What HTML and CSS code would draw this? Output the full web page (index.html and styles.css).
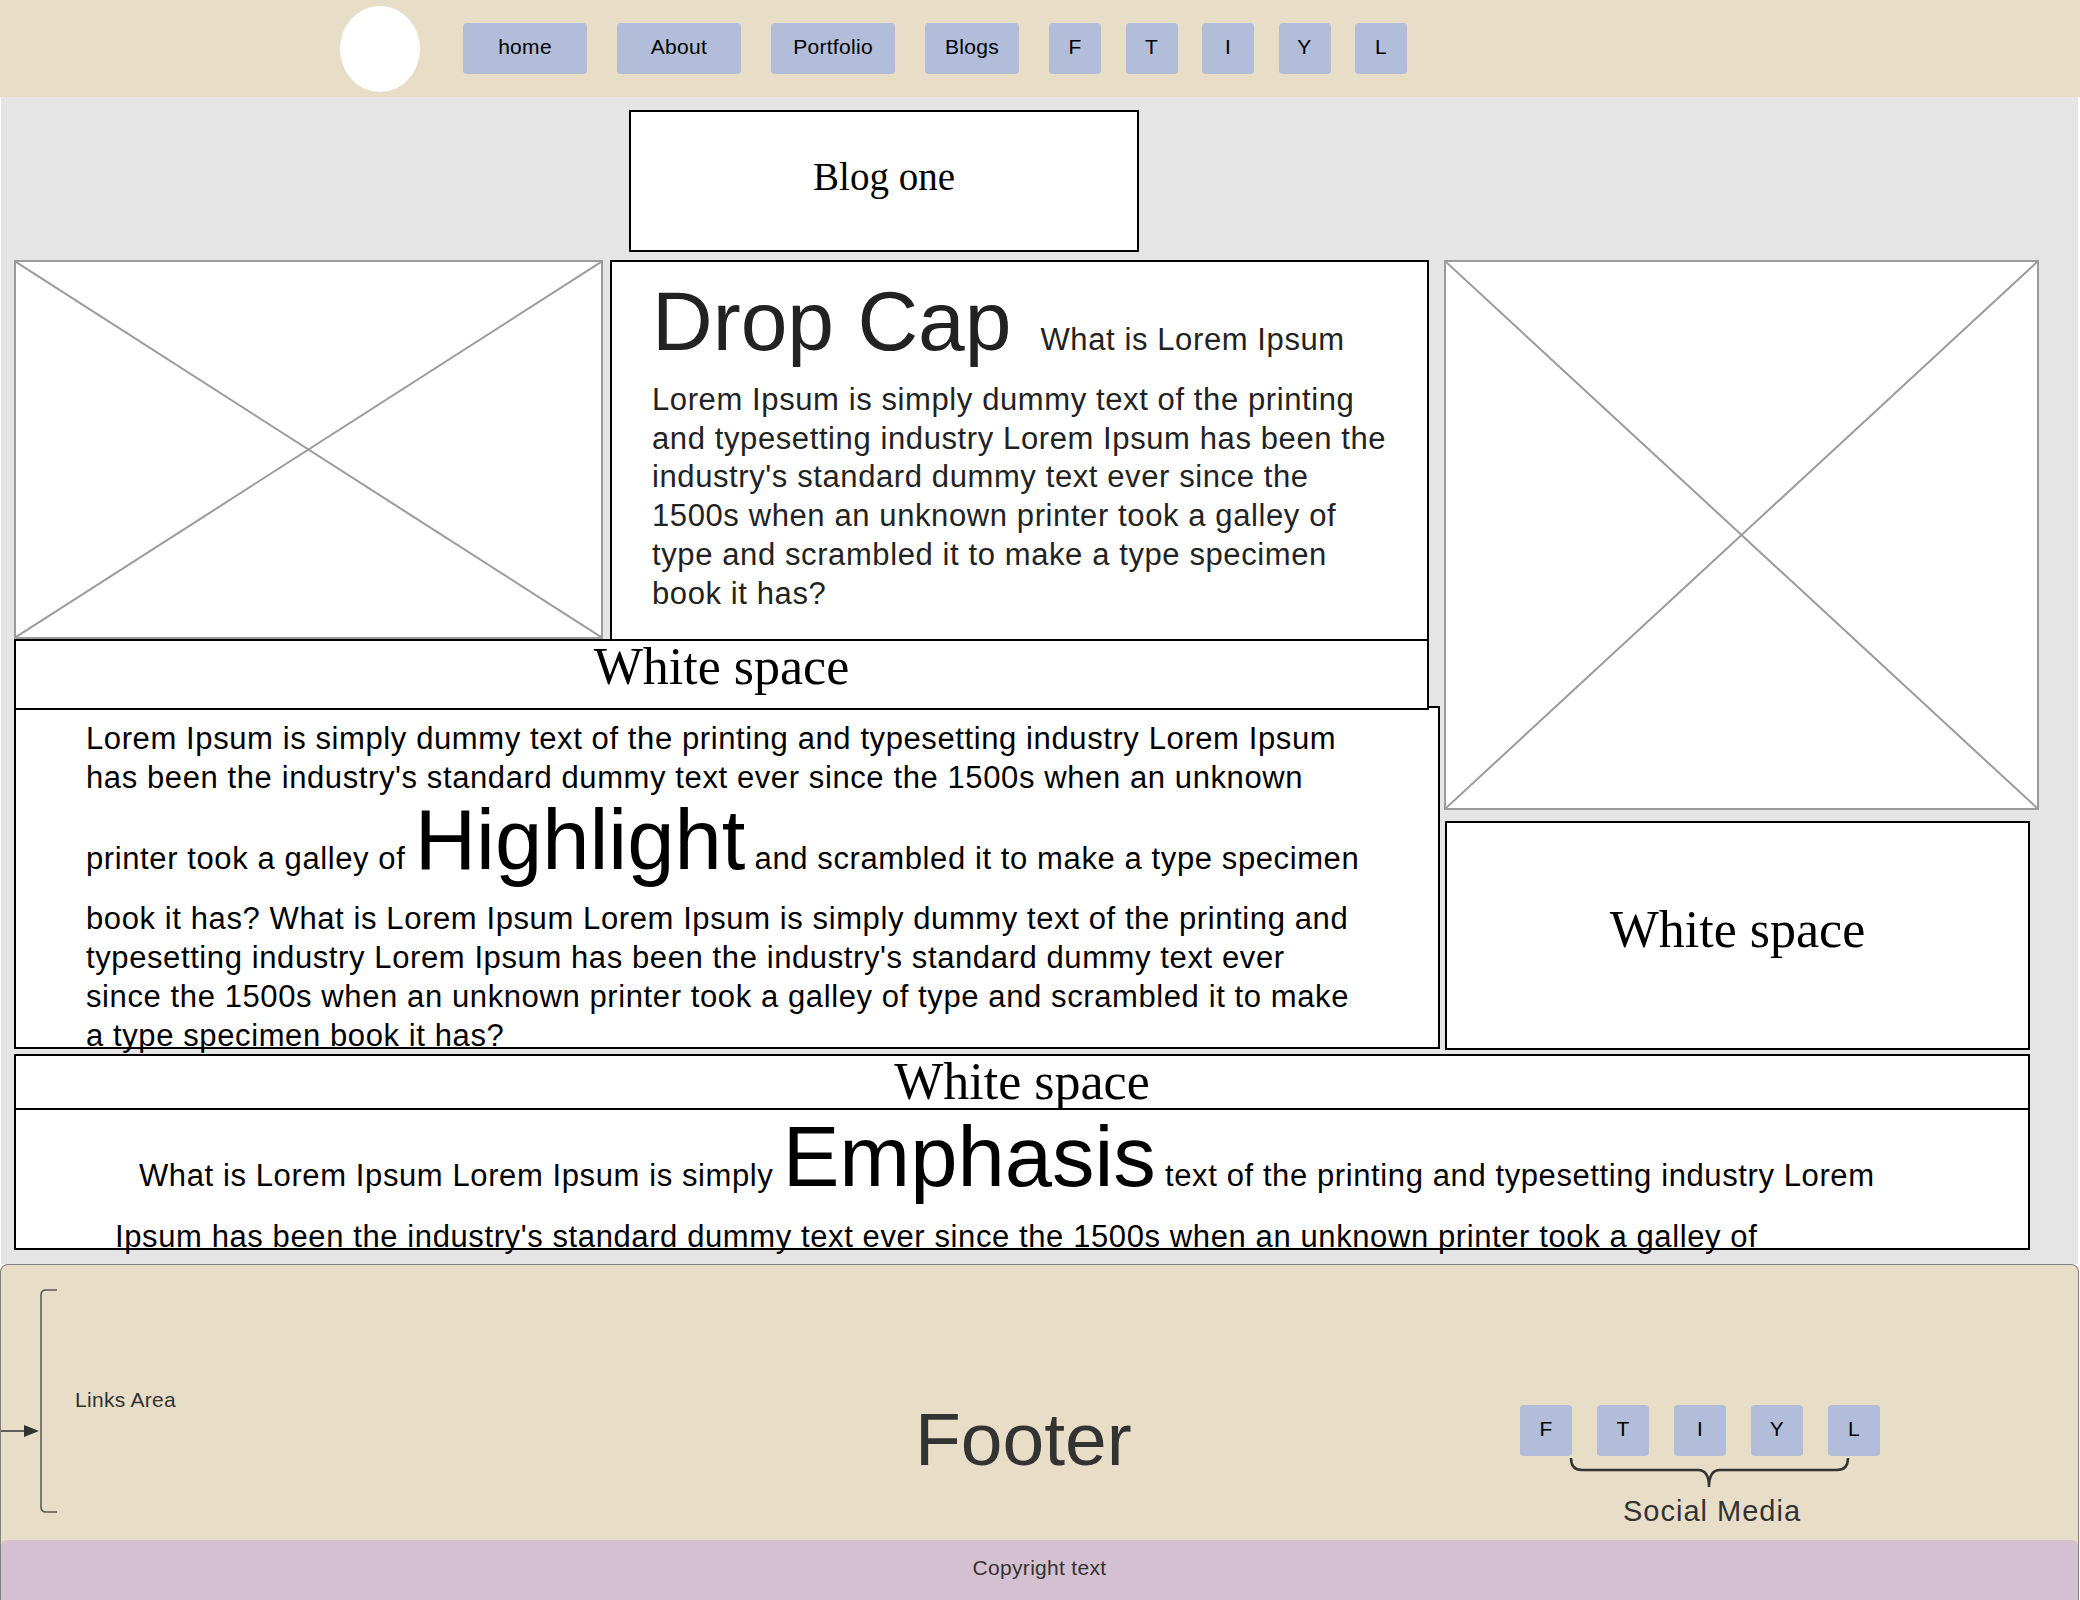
FILE: index.html
```html
<!DOCTYPE html>
<html lang="en">
<head>
<meta charset="utf-8">
<title>Blog one</title>
<link rel="stylesheet" href="styles.css">
</head>
<body>
<header class="site-header">
  <div class="logo"></div>
  <nav class="nav">
    <div class="nav-pages">
      <a class="btn btn-page">home</a>
      <a class="btn btn-page">About</a>
      <a class="btn btn-page">Portfolio</a>
      <a class="btn btn-blogs">Blogs</a>
    </div>
    <div class="nav-social">
      <a class="btn btn-sq">F</a>
      <a class="btn btn-sq">T</a>
      <a class="btn btn-sq">I</a>
      <a class="btn btn-sq">Y</a>
      <a class="btn btn-sq">L</a>
    </div>
  </nav>
</header>

<main class="page">
  <div class="blog-title">Blog one</div>
  <div class="content">
    <div class="col-left">
      <div class="row-top">
        <div class="placeholder ph-left">
          <svg viewBox="0 0 100 100" preserveAspectRatio="none"><line x1="0" y1="0" x2="100" y2="100" class="xline"/><line x1="100" y1="0" x2="0" y2="100" class="xline"/></svg>
        </div>
        <article class="dropcap">
          <div class="dc-head"><span class="dc-big">Drop Cap</span><span class="dc-sub">What is Lorem Ipsum</span></div>
          <p class="dc-text">Lorem Ipsum is simply dummy text of the printing and typesetting industry Lorem Ipsum has been the industry's standard dummy text ever since the 1500s when an unknown printer took a galley of type and scrambled it to make a type specimen book it has?</p>
        </article>
      </div>
      <div class="ws ws-left">White space</div>
      <div class="highlight-box">
        <p class="body-text">Lorem Ipsum is simply dummy text of the printing and typesetting industry Lorem Ipsum has been the industry's standard dummy text ever since the 1500s when an unknown printer took a galley of <span class="big">Highlight</span> and scrambled it to make a type specimen book it has? What is Lorem Ipsum Lorem Ipsum is simply dummy text of the printing and typesetting industry Lorem Ipsum has been the industry's standard dummy text ever since the 1500s when an unknown printer took a galley of type and scrambled it to make a type specimen book it has?</p>
      </div>
    </div>
    <div class="col-right">
      <div class="placeholder ph-right">
        <svg viewBox="0 0 100 100" preserveAspectRatio="none"><line x1="0" y1="0" x2="100" y2="100" class="xline"/><line x1="100" y1="0" x2="0" y2="100" class="xline"/></svg>
      </div>
      <div class="ws ws-right">White space</div>
    </div>
  </div>
  <div class="ws ws-wide">White space</div>
  <div class="emphasis-box">
    <p class="body-text emph-text">What is Lorem Ipsum Lorem Ipsum is simply <span class="big big-em">Emphasis</span> text of the printing and typesetting industry Lorem Ipsum has been the industry's standard dummy text ever since the 1500s when an unknown printer took a galley of</p>
  </div>
</main>

<footer class="footer">
  <div class="footer-main">
    <div class="links">
      <svg class="links-bracket" width="58" height="224" viewBox="0 0 58 224">
        <path d="M56 1 H45 Q40 1 40 6 V218 Q40 223 45 223 H56" fill="none" stroke="#555" stroke-width="1.5"/>
        <line x1="0" y1="142" x2="25" y2="142" stroke="#333" stroke-width="1.5"/>
        <polygon points="23,136 38,142 23,148" fill="#333"/>
      </svg>
      <span class="links-label">Links Area</span>
    </div>
    <div class="footer-title">Footer</div>
    <div class="social">
      <div class="social-row">
        <a class="btn btn-sq">F</a>
        <a class="btn btn-sq">T</a>
        <a class="btn btn-sq">I</a>
        <a class="btn btn-sq">Y</a>
        <a class="btn btn-sq">L</a>
      </div>
      <svg class="brace" width="284" height="32" viewBox="0 0 284 32">
        <path d="M2 1 Q2 13 13 13 H129 Q140 13 140 30 Q140 13 151 13 H268 Q279 13 279 1" fill="none" stroke="#333" stroke-width="2.5"/>
      </svg>
      <div class="social-label">Social Media</div>
    </div>
  </div>
  <div class="copyright">Copyright text</div>
</footer>
</body>
</html>
```

FILE: styles.css
```css
* { box-sizing: border-box; }

html, body {
  margin: 0;
  padding: 0;
  background: #ffffff;
  font-family: "Liberation Sans", Arial, sans-serif;
}

/* ---------- header ---------- */
.site-header {
  display: flex;
  align-items: center;
  height: 97px;
  padding-left: 340px;
  background: #e8dec7;
}

.logo {
  width: 80px;
  height: 86px;
  border-radius: 50%;
  background: #ffffff;
}

.nav {
  display: flex;
  align-items: center;
  margin-left: 43px;
}

.nav-pages {
  display: flex;
  gap: 30px;
}

.nav-social {
  display: flex;
  gap: 24.5px;
  margin-left: 30px;
}

.btn {
  display: flex;
  align-items: center;
  justify-content: center;
  height: 51px;
  padding-bottom: 3px;
  background: #b1bdd9;
  border-radius: 4px;
  color: #000;
  font-size: 21px;
  letter-spacing: 0.3px;
  text-decoration: none;
}

.btn-page { width: 124px; }
.btn-blogs { width: 94px; }
.btn-sq { width: 52px; }

/* ---------- main ---------- */
.page {
  margin: 0 2px 0 1px;
  padding: 13px 0 14px 13px;
  background: #e5e5e5;
}

.blog-title {
  display: flex;
  align-items: center;
  justify-content: center;
  width: 510px;
  height: 142px;
  margin-left: 615px;
  padding-bottom: 10px;
  border: 2px solid #000;
  background: #fff;
  font-family: "Liberation Serif", "Times New Roman", serif;
  font-size: 39px;
  color: #000;
}

.content {
  display: flex;
  margin-top: 8px;
}

.col-left {
  width: 1426px;
}

.row-top {
  display: flex;
}

.placeholder {
  border: 2px solid #9b9b9b;
  background: #fff;
}

.placeholder svg {
  display: block;
  width: 100%;
  height: 100%;
}

.xline {
  stroke: #9b9b9b;
  stroke-width: 2;
  vector-effect: non-scaling-stroke;
}

.ph-left {
  width: 589px;
  height: 379px;
}

.dropcap {
  width: 819px;
  height: 379px;
  margin-left: 7px;
  padding: 17px 25px 0 40px;
  border: 2px solid #000;
  border-bottom: none;
  background: #fff;
  color: #222;
}

.dc-head {
  display: flex;
  align-items: baseline;
  gap: 29px;
}

.dc-big {
  font-size: 84px;
  line-height: 84px;
  white-space: nowrap;
}

.dc-sub {
  font-size: 31px;
  letter-spacing: 0.6px;
  line-height: 38.7px;
  white-space: nowrap;
}

.dc-text {
  margin: 18px 0 0;
  font-size: 31px;
  letter-spacing: 0.6px;
  line-height: 38.7px;
}

.ws {
  border: 2px solid #000;
  background: #fff;
  font-family: "Liberation Serif", "Times New Roman", serif;
  font-size: 52px;
  line-height: 52px;
  text-align: center;
  color: #000;
}

.ws-left {
  position: relative;
  z-index: 1;
  width: 1415px;
  height: 71px;
}

.highlight-box {
  width: 1426px;
  height: 343px;
  margin-top: -4px;
  padding: 11px 75px 0 70px;
  border: 2px solid #000;
  background: #fff;
}

.body-text {
  margin: 0;
  font-size: 31px;
  letter-spacing: 0.6px;
  line-height: 39px;
  color: #000;
}

.big {
  display: inline-block;
  font-size: 85px;
  line-height: 85px;
  letter-spacing: 0;
  text-indent: 0;
  margin-bottom: 17px;
}

.big-em {
  margin-bottom: 18px;
}

.col-right {
  margin-left: 4px;
}

.ph-right {
  width: 595px;
  height: 550px;
}

.ws-right {
  display: flex;
  align-items: center;
  justify-content: center;
  width: 585px;
  height: 229px;
  margin-top: 11px;
  margin-left: 1px;
  padding-bottom: 12px;
}

.ws-wide {
  width: 2016px;
  height: 56px;
  margin-top: 4px;
}

.emphasis-box {
  width: 2016px;
  height: 140px;
  padding: 4px 108px 0 99px;
  border: 2px solid #000;
  border-top: none;
  background: #fff;
}

.emph-text {
  text-indent: 24px;
}

/* ---------- footer ---------- */
.footer {
  height: 336px;
  margin-right: 1px;
  border: 1px solid #808080;
  border-bottom: none;
  border-radius: 8px 8px 0 0;
  background: #e8dec7;
  overflow: hidden;
  color: #333;
}

.footer-main {
  display: flex;
  align-items: flex-start;
  height: 275px;
}

.links {
  display: flex;
  align-items: flex-start;
  width: 200px;
}

.links-bracket {
  display: block;
  margin-top: 24px;
  flex: none;
}

.links-label {
  margin-top: 124px;
  margin-left: 16px;
  font-size: 21px;
  letter-spacing: 0.3px;
  line-height: 21px;
  white-space: nowrap;
}

.footer-title {
  width: 216px;
  margin-left: 714px;
  margin-top: 137px;
  font-size: 75px;
  line-height: 75px;
  text-align: center;
  white-space: nowrap;
}

.social {
  display: flex;
  flex-direction: column;
  align-items: flex-start;
  margin-left: 389px;
  margin-top: 140px;
}

.social-row {
  display: flex;
  gap: 25px;
}

.brace {
  display: block;
  margin-left: 49px;
  margin-top: 1px;
}

.social-label {
  margin-left: 103px;
  margin-top: 8px;
  font-size: 29px;
  letter-spacing: 1px;
  line-height: 29px;
  white-space: nowrap;
}

.copyright {
  display: flex;
  align-items: center;
  justify-content: center;
  height: 60px;
  padding-bottom: 5px;
  border-radius: 6px 6px 0 0;
  background: #d4c0d0;
  font-size: 21px;
  letter-spacing: 0.3px;
  color: #333;
}
```
